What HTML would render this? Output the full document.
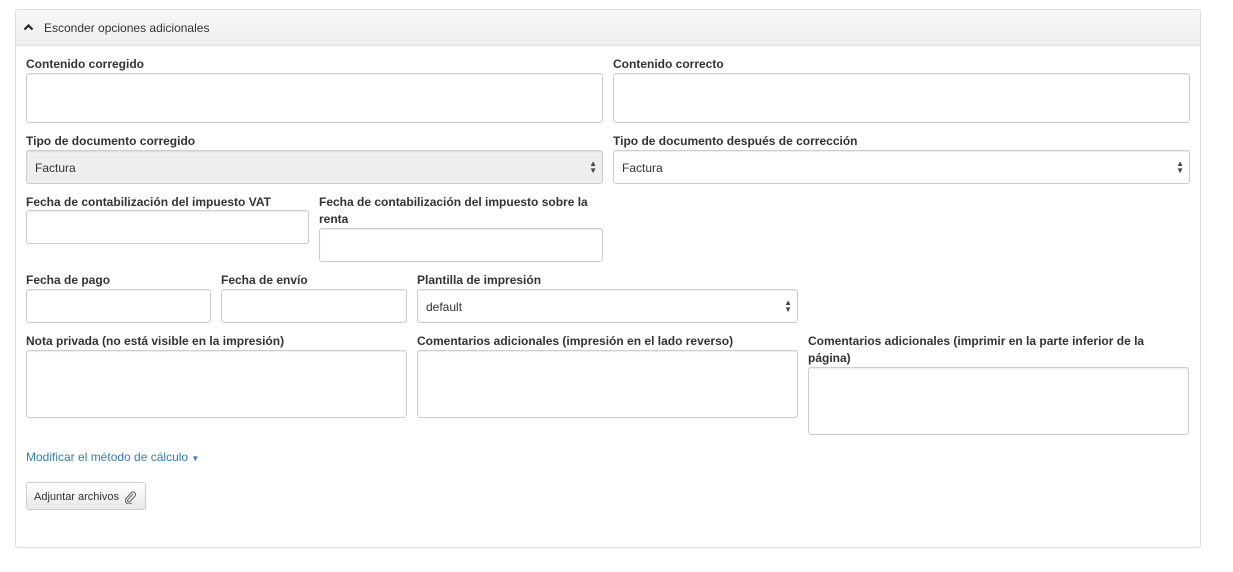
<!DOCTYPE html><html><head><style>
body{margin:0;background:#fff;font-family:"Liberation Sans",sans-serif;font-size:12px;color:#333;position:relative;width:1233px;height:572px;overflow:hidden}
.a{position:absolute}
.panel{left:15px;top:9px;width:1184px;height:537px;border:1px solid #ddd;border-radius:3px}
.hdr{left:16px;top:10px;width:1184px;height:35px;background:linear-gradient(#f7f7f7,#efefef);border-bottom:1px solid #ddd}
.l{position:absolute;font-weight:bold;font-size:12px;line-height:17px;color:#333}
.b{position:absolute;border:1px solid #ccc;border-radius:3px;background:#fff;box-sizing:border-box;box-shadow:inset 0 1px 1px rgba(0,0,0,.075)}
.s{font-size:12px;padding:11px 8px 0;line-height:13px}
.arr{position:absolute;right:5px;top:9px;font-size:8px;line-height:7px;color:#444}
</style></head><body>
<div class="a panel"></div>
<div class="a hdr"></div>
<svg class="a" style="left:23px;top:23px" width="11" height="8"><path d="M1.5 6.5L5.5 2.5L9.5 6.5" stroke="#222" stroke-width="2.2" fill="none"/></svg>
<div class="a" style="left:44px;top:21px;font-size:12px">Esconder opciones adicionales</div>

<div class="l" style="left:26px;top:56px">Contenido corregido</div>
<div class="b" style="left:26px;top:73px;width:577px;height:50px"></div>
<div class="l" style="left:613px;top:56px">Contenido correcto</div>
<div class="b" style="left:613px;top:73px;width:577px;height:50px"></div>

<div class="l" style="left:26px;top:133px">Tipo de documento corregido</div>
<div class="b s" style="left:26px;top:150px;width:577px;height:34px;background:#eee">Factura<div class="arr">▲<br>▼</div></div>
<div class="l" style="left:613px;top:133px">Tipo de documento después de corrección</div>
<div class="b s" style="left:613px;top:150px;width:577px;height:34px">Factura<div class="arr">▲<br>▼</div></div>

<div class="l" style="left:26px;top:194px">Fecha de contabilización del impuesto VAT</div>
<div class="b" style="left:26px;top:210px;width:283px;height:34px"></div>
<div class="l" style="left:319px;top:194px;width:284px">Fecha de contabilización del impuesto sobre la renta</div>
<div class="b" style="left:319px;top:228px;width:284px;height:34px"></div>

<div class="l" style="left:26px;top:272px">Fecha de pago</div>
<div class="b" style="left:26px;top:289px;width:185px;height:34px"></div>
<div class="l" style="left:221px;top:272px">Fecha de envío</div>
<div class="b" style="left:221px;top:289px;width:186px;height:34px"></div>
<div class="l" style="left:417px;top:272px">Plantilla de impresión</div>
<div class="b s" style="left:417px;top:289px;width:381px;height:34px">default<div class="arr">▲<br>▼</div></div>

<div class="l" style="left:26px;top:333px">Nota privada (no está visible en la impresión)</div>
<div class="b" style="left:26px;top:350px;width:381px;height:68px"></div>
<div class="l" style="left:417px;top:333px">Comentarios adicionales (impresión en el lado reverso)</div>
<div class="b" style="left:417px;top:350px;width:381px;height:68px"></div>
<div class="l" style="left:808px;top:333px;width:381px">Comentarios adicionales (imprimir en la parte inferior de la página)</div>
<div class="b" style="left:808px;top:367px;width:381px;height:68px"></div>

<div class="a" style="left:26px;top:450px;color:#337ab7;font-size:12px">Modificar el método de cálculo <span style="font-size:8px">▼</span></div>
<div class="a" style="left:26px;top:482px;width:120px;height:28px;border:1px solid #ccc;border-radius:3px;background:linear-gradient(#fff,#e8e8e8);box-sizing:border-box;font-size:11px;padding:8px 0 0 7px">Adjuntar archivos
<svg style="position:absolute;left:97px;top:8px" width="13" height="13" viewBox="0 0 13 13"><path d="M9 3L4 8.5a1.3 1.3 0 0 0 2 2L11 5a2.5 2.5 0 0 0-3.5-3.5L2.5 7a3.5 3.5 0 0 0 5 5" stroke="#666" stroke-width="1.1" fill="none"/></svg></div>
</body></html>
